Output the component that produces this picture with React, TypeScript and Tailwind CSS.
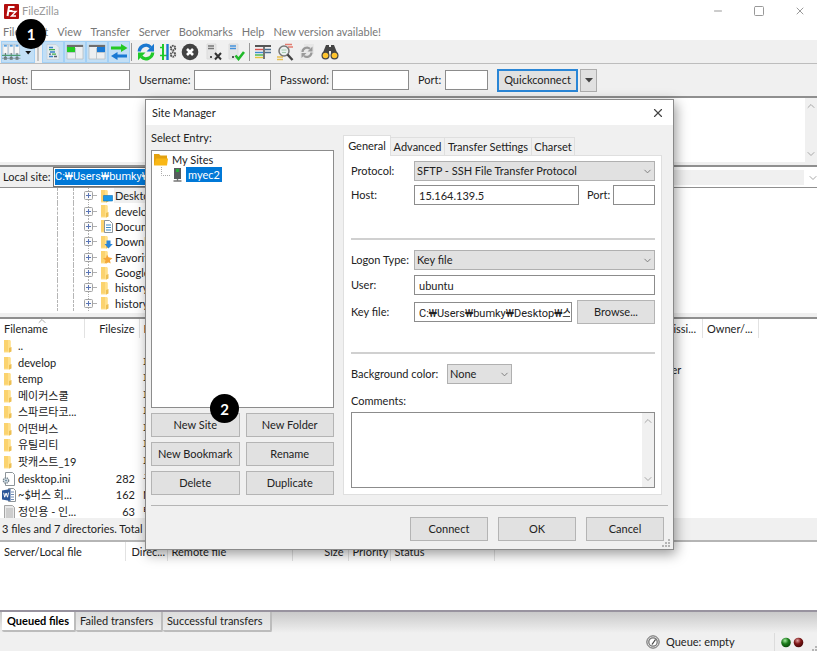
import type { ReactNode } from "react";
import { ChevronDown, ChevronUp, Minus, Square, X } from "lucide-react";
import clsx from "clsx";

const menus = ["File", "Edit", "View", "Transfer", "Server", "Bookmarks", "Help", "New version available!"];

const localTree = [
  { name: "Desktop", kind: "desktop" },
  { name: "develop", kind: "folder" },
  { name: "Documents", kind: "docs" },
  { name: "Downloads", kind: "down" },
  { name: "Favorites", kind: "star" },
  { name: "Google Drive", kind: "folder" },
  { name: "history", kind: "folder" },
  { name: "history2", kind: "folder" },
];

const localFiles = [
  { name: "..", size: "", type: "", kind: "folder" },
  { name: "develop", size: "", type: "파일 폴더", kind: "folder" },
  { name: "temp", size: "", type: "파일 폴더", kind: "folder" },
  { name: "메이커스쿨", size: "", type: "파일 폴더", kind: "folder" },
  { name: "스파르타코...", size: "", type: "파일 폴더", kind: "folder" },
  { name: "어떤버스", size: "", type: "파일 폴더", kind: "folder" },
  { name: "유틸리티", size: "", type: "파일 폴더", kind: "folder" },
  { name: "팟캐스트_19", size: "", type: "파일 폴더", kind: "folder" },
  { name: "desktop.ini", size: "282", type: "구성 설정", kind: "ini" },
  { name: "~$버스 회...", size: "162", type: "Microsoft", kind: "word" },
  { name: "정인용 - 인...", size: "63", type: "텍스트", kind: "text" },
];

function FileIcon({ kind }: { kind: string }) {
  if (kind === "ini") {
    return (
      <svg width="14" height="14" viewBox="0 0 14 14" className="shrink-0">
        <path d="M3.5.5h7l2 2v11h-9z" fill="#fff" stroke="#8d9499" />
        <circle cx="4" cy="8.5" r="2.6" fill="#dfe7ec" stroke="#77858f" strokeWidth="1.4" strokeDasharray="1.4 .7" />
        <circle cx="4" cy="8.5" r="1" fill="#6d8ea4" />
      </svg>
    );
  }
  if (kind === "word") {
    return (
      <svg width="14" height="14" viewBox="0 0 14 14" className="shrink-0">
        <path d="M6.5.5h5l2 2v11h-7z" fill="#fff" stroke="#8d9499" />
        <path d="M9 4h3M9 6.500h3M9 9h3M9 11.500h3" stroke="#6f8bb5" />
        <path d="M0 2.500l8.500-1.500v12L0 11.500z" fill="#2b579a" />
        <path d="M1.700 4.800l1 4.400 1.400-4.200 1.400 4.200 1-4.600" fill="none" stroke="#fff" />
      </svg>
    );
  }
  if (kind === "text") {
    return (
      <svg width="14" height="14" viewBox="0 0 14 14" className="shrink-0">
        <path d="M2.500.5h8l2 2v11h-10z" fill="#e9e9e9" stroke="#a5a5a5" />
        <path d="M4 4h7M4 6h7M4 8h7M4 10h7M4 12h7" stroke="#b1b1b1" />
      </svg>
    );
  }
  return (
    <svg width="14" height="14" viewBox="0 0 14 14" className="shrink-0">
      <path d="M2 1h6l.8 1v10.500l-1.300 1H2z" fill="#ffe08b" />
      <path d="M2 1h4v11.500H2z" fill="#fbd36f" />
      <path d="M7 9l2.500-1v4.500l-2.500 1z" fill="#edbf52" />
      {kind === "desktop" && <path d="M4.500 6.500h9v5.500h-9z" fill="#1697ea" stroke="#0b6fb8" strokeWidth=".6" />}
      {kind === "docs" && (
        <>
          <path d="M5.500 1.500h5l3 3v9h-8z" fill="#fff" stroke="#8a949b" />
          <path d="M7 6h5M7 8.500h5M7 11h5" stroke="#3c8bc5" />
        </>
      )}
      {kind === "down" && <path d="M7.500 5.500h4V9h2.300L9.500 13.500 5.500 9h2z" fill="#2b86d9" />}
      {kind === "star" && <path d="M8 4.500l1.500 2.800 4 .9-2.600 2 .8 3.300-3-1.500-3 1.500.7-3.300-2.400-2 3-.5z" fill="#f5a63a" />}
    </svg>
  );
}

function ToolButton({ label, active, children }: { label: string; active?: boolean; children: ReactNode }) {
  return (
    <button
      type="button"
      aria-label={label}
      className={clsx("flex h-[22px] w-[22px] items-center justify-center", active && "border border-[#a3d0f5] bg-[#c2dff6]")}
    >
      <svg width="18" height="18" viewBox="0 0 18 18" className="shrink-0">
        {children}
      </svg>
    </button>
  );
}

function Toolbar() {
  return (
    <div className="flex h-6 items-center border-b border-[#bdbdbd] bg-[#f0f0f0]">
      <button type="button" aria-label="Open the Site Manager" className="ml-px flex h-[22px] w-[34px] items-center border border-[#a3d0f5] bg-[#c2dff6]">
        <svg width="33" height="18" viewBox="0 0 33 18">
          {[2, 8, 14].map((x) => (
            <g key={x}>
              <rect x={x - 1} y="1" width="5" height="10" fill="#f7f7f7" stroke="#b5bec6" strokeWidth=".6" />
              <rect x={x} y="1.500" width="3" height="2" fill="#5aa2e0" />
              <path d={`M${x + 1.5} 10v4`} stroke="#5b6a66" />
              <rect x={x} y="14" width="3" height="3" fill="#69777a" />
            </g>
          ))}
          <path d="M0 12.500h19" stroke="#4f9d72" strokeWidth="1.200" />
          <path d="M0 15.500h19" stroke="#7b868b" strokeWidth=".8" />
          <path d="M24 8h6l-3 3.500z" fill="#111" />
        </svg>
      </button>
      <span className="mx-[2px] h-[18px] w-[2px] bg-[#c4c4c4]" />
      <span className="w-px" />
      <ToolButton label="Toggle message log" active>
        <path d="M3 1.500h9l3 3v12H3z" fill="#e4ebf0" stroke="#c6ced4" strokeWidth=".7" />
        <path d="M5 4.500h4M6 9h5M5 13.500h4" stroke="#3a82c8" strokeWidth="1.300" />
        <path d="M5 6.700h6M8 11.200h4" stroke="#3fae49" strokeWidth="1.300" />
        <path d="M10 13.500h3M5 11.200h2" stroke="#53616b" strokeWidth="1.300" />
      </ToolButton>
      <ToolButton label="Toggle local directory tree" active>
        <path d="M1 2h16v14H1z" fill="#eceff1" stroke="#b8bec3" strokeWidth=".8" />
        <path d="M1 2h16v2H1z" fill="#6e6e6e" />
        <path d="M1 4h8v5H1z" fill="#21cc21" />
        <path d="M9.500 5v11M1 9.500h8" stroke="#bec7cc" />
      </ToolButton>
      <ToolButton label="Toggle remote directory tree" active>
        <path d="M1 2h16v14H1z" fill="#eceff1" stroke="#b8bec3" strokeWidth=".8" />
        <path d="M1 2h16v2H1z" fill="#6e6e6e" />
        <path d="M9 4h8v5H9z" fill="#1979d4" />
        <path d="M8.500 5v11M9 9.500h8" stroke="#bec7cc" />
      </ToolButton>
      <ToolButton label="Toggle transfer queue" active>
        <path d="M1 3.500h10V1l6.500 4-6.500 4V6.500H1z" fill="#23c923" />
        <path d="M17 11.500H7.500V9L1 13l6.500 4v-2.500H17z" fill="#1979d4" />
      </ToolButton>
      <span className="ml-px mr-[3px] h-[18px] w-px bg-[#999999]" />
      <ToolButton label="Refresh">
        <path d="M2.300 8.500a6.700 6.700 0 0 1 11.500-4.200" fill="none" stroke="#1b78d0" strokeWidth="3.300" />
        <path d="M17 .8v7.700H9.500z" fill="#1b78d0" />
        <path d="M15.700 9.500a6.700 6.700 0 0 1-11.500 4.200" fill="none" stroke="#20c929" strokeWidth="3.300" />
        <path d="M1 17.200V9.500h7.500z" fill="#20c929" />
      </ToolButton>
      <ToolButton label="Process queue">
        <path d="M4 1v16" stroke="#20c929" strokeWidth="2" />
        <path d="M1 4.500h3M1 12.500h7" stroke="#20c929" strokeWidth="1.600" />
        <path d="M8.500 1v16" stroke="#1b78d0" strokeWidth="2.400" />
        <circle cx="14" cy="5" r="2.200" fill="none" stroke="#555" strokeWidth="2" strokeDasharray="1.500 .6" />
        <circle cx="14" cy="11.500" r="2.200" fill="none" stroke="#555" strokeWidth="2" strokeDasharray="1.500 .6" />
      </ToolButton>
      <ToolButton label="Cancel current operation">
        <circle cx="9" cy="9" r="8.300" fill="#424242" />
        <path d="M6 6l6 6M12 6l-6 6" stroke="#fff" strokeWidth="2.600" />
      </ToolButton>
      <span className="w-[2px]" />
      <ToolButton label="Disconnect">
        <path d="M2 1h9v15H2z" fill="#e6e6e6" stroke="#d6d6d6" strokeWidth=".7" />
        <path d="M3 3h6M3 5.500h6" stroke="#777" strokeWidth="1.400" />
        <path d="M5 13h2v2H5z" fill="#555" />
        <path d="M10 10l6 6.500M16 10l-6 6.500" stroke="#333" strokeWidth="2" />
      </ToolButton>
      <ToolButton label="Reconnect">
        <path d="M2 1h9v15H2z" fill="#e6e6e6" stroke="#d6d6d6" strokeWidth=".7" />
        <path d="M3 3h6M3 5.500h6" stroke="#4592dc" strokeWidth="1.600" />
        <path d="M5 13h2v2H5z" fill="#555" />
        <path d="M8.500 12.500l3 3.500 5.500-7" fill="none" stroke="#20b929" strokeWidth="2.600" />
      </ToolButton>
      <span className="mx-[2px] h-[18px] w-px bg-[#999999]" />
      <ToolButton label="Filter the directory listings">
        <path d="M1 3h16" stroke="#555" strokeWidth="2" />
        <path d="M1 6.500h8" stroke="#d9534f" strokeWidth="1.400" />
        <path d="M1 9.500h8" stroke="#3d88d2" strokeWidth="1.400" />
        <path d="M1 12h8" stroke="#42b649" strokeWidth="1.400" />
        <path d="M1 14.500h8" stroke="#e5c43c" strokeWidth="1.400" />
        <path d="M11 6.500h6M11 9.500h6" stroke="#4d6f8f" strokeWidth="1.400" />
        <path d="M10 3v13" stroke="#555" strokeWidth="1.600" />
      </ToolButton>
      <ToolButton label="Toggle directory comparison">
        <path d="M9 1.500h7M12 4h5" stroke="#e27c70" strokeWidth="1.600" />
        <path d="M1 14h6M1 16.500h6" stroke="#e6bf52" strokeWidth="1.400" />
        <circle cx="8" cy="8" r="5" fill="#e9f0ef" stroke="#777" strokeWidth="1.500" />
        <path d="M5.500 7h5M6 9.500h4" stroke="#a5cdb0" strokeWidth="1.200" />
        <path d="M11.500 11.500l5 5.500" stroke="#444" strokeWidth="2.400" />
      </ToolButton>
      <ToolButton label="Toggle synchronized browsing">
        <path d="M6 1h10v10H6zM2 6h10v11H2z" fill="#e7e7e7" />
        <path d="M4.500 9a4.500 4.500 0 0 1 7.500-3.200" fill="none" stroke="#999" strokeWidth="2.200" />
        <path d="M14.500 3.500v5h-5z" fill="#999" />
        <path d="M13.500 9.500A4.500 4.500 0 0 1 6 12.700" fill="none" stroke="#999" strokeWidth="2.200" />
        <path d="M3.500 15v-5h5z" fill="#999" />
      </ToolButton>
      <span className="w-px" />
      <ToolButton label="Search for files">
        <path d="M5 2h3v2h2V2h3l4 10H10V8H8v4H1z" fill="#454545" />
        <circle cx="4.500" cy="12.500" r="4" fill="#454545" />
        <circle cx="13.500" cy="12.500" r="4" fill="#454545" />
        <circle cx="4.500" cy="12.500" r="2.800" fill="#ffc52e" />
        <circle cx="13.500" cy="12.500" r="2.800" fill="#ffc52e" />
      </ToolButton>
    </div>
  );
}

function QuickField({ id, label, size }: { id: string; label: string; size: string }) {
  return (
    <div className="flex items-center justify-between">
      <label htmlFor={id}>{label}</label>
      <input id={id} className={clsx("h-5 border border-[#8c8c8c] bg-white px-1 outline-none", size)} />
    </div>
  );
}

function QuickConnect() {
  return (
    <form className="flex h-[34px] items-center border-b-2 border-[#8f8f8f] bg-[#f0f0f0] pl-[2px]" onSubmit={(e) => e.preventDefault()}>
      <div className="grid grid-cols-[128px_132px_129px_70px] gap-[9px]">
        <QuickField id="qc-host" label="Host:" size="w-[99px]" />
        <QuickField id="qc-user" label="Username:" size="w-[77px]" />
        <QuickField id="qc-pass" label="Password:" size="w-[77px]" />
        <QuickField id="qc-port" label="Port:" size="w-[43px]" />
      </div>
      <button type="submit" className="ml-[9px] h-[23px] w-[81px] border-2 border-[#2a86d6] bg-[#e1e1e1]">
        Quickconnect
      </button>
      <button type="button" aria-label="History" className="ml-[2px] flex h-[23px] w-[17px] items-center justify-center border border-[#adadad] bg-[#e1e1e1]">
        <svg width="8" height="5" viewBox="0 0 8 5">
          <path d="M0 0h8L4 4.500z" fill="#444" />
        </svg>
      </button>
    </form>
  );
}

function ScrollTrack() {
  return (
    <div className="flex w-3 shrink-0 flex-col items-center justify-between bg-[#f0f0f0] py-[2px] text-[#a8a8a8]">
      <ChevronUp size={12} />
      <ChevronDown size={12} />
    </div>
  );
}

// Lato's won sign is too wide for paths
const pathFont = "font-[Roboto,'Noto_Sans_CJK_KR',sans-serif]";

function LocalPane() {
  return (
    <section className="flex w-1/2 flex-col">
      <div className="flex h-[21px] items-center border-b border-[#8f8f8f] bg-[#f0f0f0] pl-[3px]">
        <label htmlFor="local-site" className="w-[50px] whitespace-nowrap">Local site:</label>
        <div className="h-5 flex-1 border border-[#6f6f6f] bg-white p-px">
          <input id="local-site" defaultValue="C:₩Users₩bumky₩Desktop₩" className={clsx("block h-4 w-full bg-[#0078d7] text-white outline-none", pathFont)} />
        </div>
      </div>
      <div className="h-[125px] overflow-hidden bg-white">
        <ul className="flex h-[123px] flex-col">
          {localTree.map((item) => (
            <li key={item.name} className="flex min-h-0 flex-1 items-center pl-[57px]">
              <span className="w-4 self-stretch border-l border-dashed border-[#b5b5b5]" />
              <span className="w-[11px] self-stretch border-l border-dashed border-[#b5b5b5]" />
              <svg width="15" height="15" viewBox="0 0 15 15" className="shrink-0">
                <path d="M4.500 0v15" stroke="#b0b0b0" strokeDasharray="1 1" />
                <path d="M9 7.500h4" stroke="#b0b0b0" />
                <rect x=".5" y="3.500" width="8" height="8" rx="1" fill="#fafafa" stroke="#a3a3a3" />
                <path d="M2 7.500h5M4.500 5v5" stroke="#5a75b5" />
              </svg>
              <FileIcon kind={item.kind} />
              <span className={clsx("ml-px px-px leading-[15px]", item.kind === "desktop" && "bg-[#f0f0f0]")}>{item.name}</span>
            </li>
          ))}
        </ul>
      </div>
      <div className="h-[6px] border-b-2 border-[#8f8f8f] bg-[#f0f0f0]" />
      <div className="h-[199px] overflow-hidden bg-white">
        <table className="h-[201px] w-full table-fixed border-collapse">
          <thead>
            <tr className="h-[19px] text-left">
              <th className="relative w-[84px] border-r border-[#e2e2e2] pl-1 font-normal">
                Filename
                <ChevronUp size={12} strokeWidth={1} className="absolute -top-1 left-[36px] text-[#555]" />
              </th>
              <th className="w-[55px] border-r border-[#e2e2e2] pr-1 text-right font-normal">Filesize</th>
              <th className="pl-1 font-normal">Filetype</th>
            </tr>
          </thead>
          <tbody>
            {localFiles.map((f) => (
              <tr key={f.name} className="whitespace-nowrap leading-4">
                <td className="p-0">
                  <div className="flex h-4 items-center gap-[2px] pl-[2px]">
                    <FileIcon kind={f.kind} />
                    <span>{f.name}</span>
                  </div>
                </td>
                <td className="py-0 pr-1 text-right">{f.size}</td>
                <td className="py-0 pl-1">{f.type}</td>
              </tr>
            ))}
          </tbody>
        </table>
      </div>
      <p className="h-[22px] bg-[#f0f0f0] pl-[2px] leading-[22px]">3 files and 7 directories. Total size: 507 bytes</p>
    </section>
  );
}

function RemotePane() {
  return (
    <section className="flex w-1/2 flex-col">
      <div className="flex h-[21px] items-center border-b border-[#8f8f8f] bg-white pl-[3px]">
        <label htmlFor="remote-site" className="w-[64px]">Remote site:</label>
        <div className="relative flex-1 pr-[13px]">
          <select id="remote-site" disabled className="block h-[15px] w-full appearance-none bg-[#f0f0f0]" />
          <ChevronDown size={12} className="absolute -right-[2px] top-[2px] text-[#a8a8a8]" />
        </div>
      </div>
      <div className="h-[125px] bg-white" />
      <div className="h-[6px] border-b-2 border-[#8f8f8f] bg-[#f0f0f0]" />
      <div className="h-[199px] bg-white">
        <table className="w-full table-fixed border-collapse">
          <thead>
            <tr className="h-[19px] text-left">
              <th className="w-[60px] pl-1 font-normal">Filename</th>
              <th className="w-[50px] pl-1 font-normal">Filesize</th>
              <th className="w-[50px] pl-1 font-normal">Filetype</th>
              <th className="w-[75px] pl-1 font-normal">Last modi...</th>
              <th className="w-[59px] border-r border-[#e2e2e2] pr-[6px] text-right font-normal">Permissi...</th>
              <th className="w-[56px] border-r border-[#e2e2e2] pl-1 font-normal">Owner/...</th>
              <th />
            </tr>
          </thead>
        </table>
        <p className="mt-6 text-center">Not connected to any server</p>
      </div>
      <p className="h-[22px] bg-[#f0f0f0] pl-1 leading-[22px]">Not connected.</p>
    </section>
  );
}

function QueuePane() {
  return (
    <section className="flex flex-1 flex-col">
      <div className="min-h-[68px] flex-1 border-t-2 border-b-2 border-t-[#b5b5b5] border-b-[#98939f] bg-white">
        <table className="table-fixed border-collapse">
          <thead>
            <tr className="h-[19px] text-left [&>th]:border-r [&>th]:border-[#e2e2e2] [&>th]:font-normal">
              <th className="w-[125px] pl-1">Server/Local file</th>
              <th className="w-[42px] pl-[6px]">Direc...</th>
              <th className="w-[125px] pl-1">Remote file</th>
              <th className="w-[56px] pr-1 text-right">Size</th>
              <th className="w-[42px] pl-1">Priority</th>
              <th className="w-[104px] pl-1">Status</th>
            </tr>
          </thead>
        </table>
      </div>
      <div className="flex h-[21px] items-start bg-linear-to-b from-[#c9c9c9] to-[#f0f0f0] pl-[2px]">
        <button type="button" className="h-5 w-[74px] rounded-b-xs border-r-2 border-b-2 border-[#bcbcbc] bg-white font-bold text-black">Queued files</button>
        <button type="button" className="h-5 w-[87px] rounded-b-xs border-r-2 border-b-2 border-[#bcbcbc] bg-linear-to-b from-[#dcdcdc] to-[#ececec] pl-1 text-left">Failed transfers</button>
        <button type="button" className="h-5 w-[109px] rounded-b-xs border-r-2 border-b-2 border-[#bcbcbc] bg-linear-to-b from-[#dcdcdc] to-[#ececec] pl-1 text-left">Successful transfers</button>
      </div>
    </section>
  );
}

function StatusBar() {
  return (
    <footer className="flex h-[18px] items-center justify-end bg-[#f0f0f0]">
      <svg width="14" height="14" viewBox="0 0 14 14" className="mr-[6px]">
        <circle cx="7" cy="7" r="6.200" fill="#e6e6e6" stroke="#666" />
        <circle cx="7" cy="7" r="4.200" fill="#fff" stroke="#777" strokeWidth="1.300" />
        <path d="M6 9.500l3.500-5" stroke="#444" strokeWidth="1.300" />
      </svg>
      <span className="w-[108px]">Queue: empty</span>
      <span className="h-full w-px bg-[#dcdcdc]" />
      <svg width="42" height="18" viewBox="0 0 42 18">
        <defs>
          <radialGradient id="led-green" cx=".4" cy=".3" r=".7">
            <stop offset="0" stopColor="#a5e8a0" />
            <stop offset=".5" stopColor="#1c7d1c" />
            <stop offset="1" stopColor="#0b4a0b" />
          </radialGradient>
          <radialGradient id="led-red" cx=".4" cy=".3" r=".7">
            <stop offset="0" stopColor="#e0a0a0" />
            <stop offset=".5" stopColor="#7e1717" />
            <stop offset="1" stopColor="#4a0808" />
          </radialGradient>
        </defs>
        <circle cx="11" cy="9.500" r="4.800" fill="url(#led-green)" />
        <circle cx="23.500" cy="9.500" r="4.800" fill="url(#led-red)" />
        <path d="M40 13h2v2h-2zM37 16h2v2h-2zM40 16h2v2h-2z" fill="#b5b5b5" />
      </svg>
    </footer>
  );
}

function DialogButton({ children, className }: { children: ReactNode; className?: string }) {
  return (
    <button type="button" className={clsx("h-6 border border-[#b4b4b4] bg-[#e1e1e1]", className)}>
      {children}
    </button>
  );
}

function Dropdown({ id, value, className }: { id: string; value: string; className?: string }) {
  return (
    <div className={clsx("relative", className)}>
      <select id={id} className="block h-5 w-full appearance-none border border-[#b0b0b0] bg-[#e1e1e1] pl-[2px] outline-none">
        <option>{value}</option>
      </select>
      <ChevronDown size={11} strokeWidth={2} className="pointer-events-none absolute right-[2px] top-[5px] text-[#777]" />
    </div>
  );
}

const fieldClass = "block h-5 w-full min-w-0 border border-[#8c8c8c] bg-white pr-px pl-1 outline-none";

function SiteForm() {
  return (
    <div className="flex-1 border border-[#dfdfdf] bg-white pt-[5px] pr-[6px] pb-[6px] pl-[7px]">
      <div className="grid grid-cols-[63px_1fr] items-center gap-y-1">
        <label htmlFor="protocol">Protocol:</label>
        <Dropdown id="protocol" value="SFTP - SSH File Transfer Protocol" />
        <label htmlFor="host">Host:</label>
        <div className="flex items-center">
          <input id="host" defaultValue="15.164.139.5" className={fieldClass} />
          <label htmlFor="port" className="w-[34px] shrink-0 pl-2">Port:</label>
          <div className="w-[42px] shrink-0">
            <input id="port" className={fieldClass} />
          </div>
        </div>
      </div>
      <hr className="mt-[33px] mb-[10px] border-t-2 border-[#d0d0d0]" />
      <div className="grid grid-cols-[63px_1fr] items-center gap-y-[5px]">
        <label htmlFor="logon" className="whitespace-nowrap">Logon Type:</label>
        <Dropdown id="logon" value="Key file" />
        <label htmlFor="user">User:</label>
        <input id="user" defaultValue="ubuntu" className={fieldClass} />
        <label htmlFor="keyfile">Key file:</label>
        <div className="flex items-center gap-[5px]">
          <input id="keyfile" defaultValue="C:₩Users₩bumky₩Desktop₩스파르타" className={clsx(fieldClass, pathFont)} />
          <DialogButton className="w-[78px] shrink-0">Browse...</DialogButton>
        </div>
      </div>
      <hr className="mt-[28px] mb-[10px] border-t-2 border-[#d0d0d0]" />
      <div className="flex items-center">
        <label htmlFor="bg-color" className="w-24">Background color:</label>
        <Dropdown id="bg-color" value="None" className="w-[65px]" />
      </div>
      <label htmlFor="comments" className="mt-[9px] block leading-4">Comments:</label>
      <div className="mt-[3px] flex h-[76px] border border-[#8c8c8c]">
        <textarea id="comments" className="flex-1 resize-none px-1 outline-none" />
        <ScrollTrack />
      </div>
    </div>
  );
}

function SiteManager() {
  return (
    <div
      role="dialog"
      aria-label="Site Manager"
      className="absolute top-[99px] left-[145px] flex h-[451px] w-[529px] flex-col border border-[#8a8a8a] bg-[#f0f0f0] shadow-[2px_4px_12px_rgba(0,0,0,0.4)]"
    >
      <header className="flex h-[26px] items-center justify-between bg-white pr-2 pl-[6px]">
        <h2>Site Manager</h2>
        <button type="button" aria-label="Close">
          <X size={14} strokeWidth={2} className="text-[#444]" />
        </button>
      </header>
      <div className="flex flex-1 pl-[5px]">
        <div className="w-[183px] pt-[5px]">
          <p className="mb-1 leading-4">Select Entry:</p>
          <div className="h-[258px] border border-[#8c8c8c] bg-white pt-[2px] pl-[2px]">
            <div className="flex h-[14px] items-center">
              <svg width="15" height="14" viewBox="0 0 15 14">
                <path d="M0 1h5l1.500 1.500H13V12H0z" fill="#e3a10f" />
                <path d="M2 5.500h12L13 12.500H0z" fill="#f9b716" />
              </svg>
              <span className="ml-[3px]">My Sites</span>
            </div>
            <div className="flex h-[15px] items-center">
              <svg width="32" height="15" viewBox="0 0 32 15">
                <path d="M7.500 0v8.500h9" fill="none" stroke="#aaa" strokeDasharray="1 1" />
                <rect x="20" y="1" width="7" height="11" fill="#565b5d" />
                <rect x="22" y="2" width="3" height="3" fill="#25ad37" />
                <path d="M23.500 12v2M19.500 14h8" stroke="#777" strokeWidth="1.400" />
              </svg>
              <span className="bg-[#0078d7] px-[2px] leading-[15px] text-white">myec2</span>
            </div>
          </div>
          <div className="mt-[5px] grid grid-cols-2 gap-x-[6px] gap-y-[5px]">
            <DialogButton>New Site</DialogButton>
            <DialogButton>New Folder</DialogButton>
            <DialogButton>New Bookmark</DialogButton>
            <DialogButton>Rename</DialogButton>
            <DialogButton>Delete</DialogButton>
            <DialogButton>Duplicate</DialogButton>
          </div>
        </div>
        <div className="ml-[9px] flex w-[319px] flex-col pt-[10px]">
          <div className="flex h-5 items-end" role="tablist">
            <button type="button" role="tab" className="relative -mb-px h-[21px] w-[48px] border border-b-0 border-[#dfdfdf] bg-white">General</button>
            <button type="button" role="tab" className="h-[18px] w-[54px] border border-b-0 border-l-0 border-[#dfdfdf]">Advanced</button>
            <button type="button" role="tab" className="h-[18px] w-[87px] border border-b-0 border-l-0 border-[#dfdfdf]">Transfer Settings</button>
            <button type="button" role="tab" className="h-[18px] w-[43px] border border-b-0 border-l-0 border-[#dfdfdf]">Charset</button>
          </div>
          <SiteForm />
        </div>
      </div>
      <footer className="relative mx-[5px] mt-[10px] flex h-[45px] items-center justify-end gap-[10px] border-t border-[#b5b5b5] pt-[2px] pr-1">
        <DialogButton className="w-[78px]">Connect</DialogButton>
        <DialogButton className="w-[78px]">OK</DialogButton>
        <DialogButton className="w-[78px]">Cancel</DialogButton>
        <svg width="9" height="9" viewBox="0 0 9 9" className="absolute -right-[3px] bottom-px">
          <path d="M6 0h2v2H6zM3 3h2v2H3zM6 3h2v2H6zM0 6h2v2H0zM3 6h2v2H3zM6 6h2v2H6z" fill="#b5b5b5" />
        </svg>
      </footer>
    </div>
  );
}

export default function App() {
  return (
    <div className="relative flex min-h-screen flex-col overflow-hidden bg-[#f0f0f0] font-[Lato,'Noto_Sans_CJK_KR',sans-serif] text-[11px] leading-4 text-[#222]">
      <header className="flex h-[22px] items-center bg-white pr-[11px] pl-1 text-[#999]">
        <svg width="15" height="15" viewBox="0 0 15 15" className="mr-[3px]">
          <rect width="15" height="15" rx="1" fill="#b30d0d" />
          <path d="M3.500 12L5 3h5.500M4.500 7h4" fill="none" stroke="#fff" strokeWidth="2" />
          <path d="M7.500 7.500h4.500l-4.500 4.500h4.500" fill="none" stroke="#fff" strokeWidth="1.400" />
        </svg>
        <h1 className="flex-1">FileZilla</h1>
        <div className="flex items-center gap-[29px]">
          <button type="button" aria-label="Minimize"><Minus size={12} strokeWidth={2} /></button>
          <button type="button" aria-label="Maximize"><Square size={12} strokeWidth={2} /></button>
          <button type="button" aria-label="Close window"><X size={12} strokeWidth={2} /></button>
        </div>
      </header>
      <nav className="flex h-[18px] items-center gap-[9px] bg-white pt-[2px] pl-[3px] text-[#777]">
        {menus.map((m) => (
          <button type="button" key={m}>{m}</button>
        ))}
      </nav>
      <Toolbar />
      <QuickConnect />
      <div className="flex h-[64px] bg-white">
        <div className="flex-1" />
        <ScrollTrack />
      </div>
      <div className="h-[5px] border-b-2 border-[#8f8f8f] bg-[#f0f0f0]" />
      <main className="flex">
        <LocalPane />
        <RemotePane />
      </main>
      <QueuePane />
      <StatusBar />
      <SiteManager />
      <span className="absolute top-[19px] left-[16px] flex h-[30px] w-[30px] items-center justify-center rounded-full bg-black text-[15px] font-bold text-white">1</span>
      <span className="absolute top-[394px] left-[210px] flex h-[29px] w-[29px] items-center justify-center rounded-full bg-black text-[15px] font-bold text-white">2</span>
    </div>
  );
}
